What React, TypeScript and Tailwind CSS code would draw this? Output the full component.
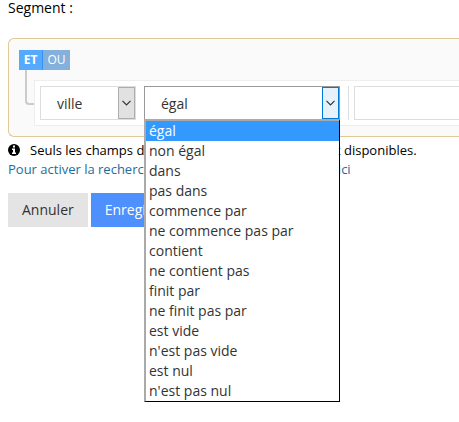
import { useState } from "react";

const OPERATORS = [
  "égal",
  "non égal",
  "dans",
  "pas dans",
  "commence par",
  "ne commence pas par",
  "contient",
  "ne contient pas",
  "finit par",
  "ne finit pas par",
  "est vide",
  "n'est pas vide",
  "est nul",
  "n'est pas nul",
];

function Chevron({ active = false }: { active?: boolean }) {
  return (
    <span
      className={
        active
          ? "pointer-events-none absolute inset-y-0 right-0 flex w-[17px] items-center justify-center border border-[#0078d7] bg-[#e5f1fb]"
          : "pointer-events-none absolute inset-y-0 right-0 flex w-[17px] items-center justify-center border border-[#adadad] bg-[#e1e1e1]"
      }
    >
      <svg width="9" height="6" viewBox="0 0 9 6" fill="none" stroke="#333" strokeWidth="1.2" aria-hidden="true">
        <path d="M0.5 0.8L4.5 4.8L8.5 0.8" />
      </svg>
    </span>
  );
}

function InfoIcon() {
  return (
    <svg width="12" height="12" viewBox="0 0 12 12" className="shrink-0" aria-hidden="true">
      <circle cx="6" cy="6" r="6" fill="#000" />
      <path d="M5 1.5h2v2H5zM4 4.5h3v4h1V10H4V8.5h1V6H4z" fill="#fff" />
    </svg>
  );
}

export default function App() {
  const [operator, setOperator] = useState("égal");
  const [value, setValue] = useState("");

  return (
    <main className="min-h-screen overflow-x-hidden bg-white pl-2 font-['Open_Sans','Noto_Sans',sans-serif] text-sm text-black">
      <h1 className="h-[38px] leading-4">Segment :</h1>

      <section className="h-[99px] rounded-l-md border border-r-0 border-[#dfc996] bg-[#fafafa] pt-[11px] pl-[10px]">
        <div className="flex h-5 leading-5">
          <button type="button" className="w-6 border-r border-[#3193f5] bg-[#55aaff] text-center text-xs leading-5 font-bold text-white">
            ET
          </button>
          <button type="button" className="w-[27px] bg-[#84b0dc] text-center text-xs leading-5 text-white">
            OU
          </button>
        </div>

        <div className="flex">
          <div className="ml-[6px] h-[35px] w-[9px] shrink-0 rounded-bl border-b-2 border-l-2 border-[#ccc]" />
          <div className="mt-[10px] flex h-[46px] grow gap-2 border border-r-0 border-[#eee] bg-white py-[5px] pl-[5px]">
            <div className="relative h-[34px] w-24 shrink-0 border border-[#ddd]">
              <select aria-label="Champ" defaultValue="ville" className="h-full w-full appearance-none bg-white pt-0.5 pl-4 text-[#333] outline-none">
                <option>ville</option>
              </select>
              <Chevron />
            </div>

            <div className="relative h-[34px] w-[196px] shrink-0 border border-[#999]">
              <select
                aria-label="Opérateur"
                value={operator}
                onChange={(e) => setOperator(e.target.value)}
                className="h-full w-full appearance-none bg-white pt-0.5 pl-4 text-[#333] outline-none"
              >
                {OPERATORS.map((name) => (
                  <option key={name}>{name}</option>
                ))}
              </select>
              <Chevron active />
              <ul
                role="listbox"
                aria-label="Opérateurs"
                className="absolute top-full -right-px -left-px z-10 border-t-2 border-r border-b border-l-2 border-t-[#aaa] border-r-black border-b-black border-l-[#aaa] bg-white text-[#333]"
              >
                {OPERATORS.map((name) => (
                  <li
                    key={name}
                    role="option"
                    aria-selected={name === operator}
                    onClick={() => setOperator(name)}
                    className={name === operator ? "bg-[#3399ff] pl-[3px] leading-5 text-white" : "pl-[3px] leading-5"}
                  >
                    {name}
                  </li>
                ))}
              </ul>
            </div>

            <div className="flex grow border-l border-[#ddd] pl-[5px]">
              <input
                aria-label="Valeur"
                value={value}
                onChange={(e) => setValue(e.target.value)}
                className="h-[34px] w-full min-w-0 border border-r-0 border-[#ddd] bg-white px-2 outline-none"
              />
            </div>
          </div>
        </div>
      </section>

      <div className="pt-[3px] text-[13px] leading-5 whitespace-nowrap">
        <p className="flex items-center gap-[10px]">
          <InfoIcon />
          Seuls les champs dont l'indexation est réalisée sont disponibles.
        </p>
        <p className="leading-[19px]">
          <a href="#recherche" className="text-[#1e6b9c]">
            Pour activer la recherche sur d'autres champs, cliquez ici
          </a>
        </p>
      </div>

      <div className="flex gap-[3px] pt-[14px]">
        <button type="button" className="h-[34px] bg-[#e4e4e4] px-[14px] text-[#333]">
          Annuler
        </button>
        <button type="button" className="h-[34px] bg-[#4d90fe] px-[14px] text-white">
          Enregistrer
        </button>
      </div>
    </main>
  );
}
